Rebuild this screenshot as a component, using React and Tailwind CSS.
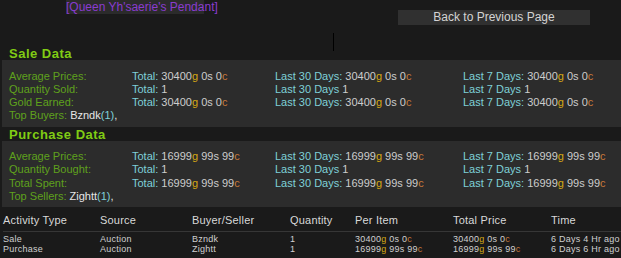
import React from "react";

const G = ({ children }) => <span className="text-[#d6a814]">{children}</span>;
const C = ({ children }) => <span className="text-[#c8783a]">{children}</span>;
const V = ({ children }) => <span className="text-[#cdcdcd]">{children}</span>;
const Cy = ({ children }) => <span className="text-[#7fd0d8]">{children}</span>;

function Money({ g, s, c }) {
  return (
    <>
      <V>{g}</V>
      <G>g</G>
      <V> {s}s {c}</V>
      <C>c</C>
    </>
  );
}

function Panel({ rows, topLabel, topName, topCount, cls }) {
  return (
    <div className={`ml-[2px] bg-[#2c2c2c] ${cls} pl-[7px] text-[11px] leading-[13.33px]`}>
      <div className="grid grid-cols-[123px_143px_188px_1fr] auto-rows-[13.33px]">
        {rows.map((r, i) => (
          <React.Fragment key={i}>
            <div className="text-[#5fa11c]">{r.label}</div>
            <div className="whitespace-nowrap">
              <Cy>Total: </Cy>
              {r.money ? <Money {...r.money} /> : <V>{r.plain}</V>}
            </div>
            <div className="whitespace-nowrap">
              <Cy>{r.money ? "Last 30 Days: " : "Last 30 Days "}</Cy>
              {r.money ? <Money {...r.money} /> : <V>{r.plain}</V>}
            </div>
            <div className="whitespace-nowrap">
              <Cy>{r.money ? "Last 7 Days: " : "Last 7 Days "}</Cy>
              {r.money ? <Money {...r.money} /> : <V>{r.plain}</V>}
            </div>
          </React.Fragment>
        ))}
      </div>
      <div className="h-[13.33px]">
        <span className="text-[#5fa11c]">{topLabel} </span>
        <span className="text-[#e6e6e6]">{topName}</span>
        <Cy>({topCount})</Cy>
        <span className="text-[#e6e6e6]">,</span>
      </div>
    </div>
  );
}

export default function App() {
  const sale = [
    { label: "Average Prices:", money: { g: "30400", s: "0", c: "0" } },
    { label: "Quantity Sold:", plain: "1" },
    { label: "Gold Earned:", money: { g: "30400", s: "0", c: "0" } },
  ];
  const purchase = [
    { label: "Average Prices:", money: { g: "16999", s: "99", c: "99" } },
    { label: "Quantity Bought:", plain: "1" },
    { label: "Total Spent:", money: { g: "16999", s: "99", c: "99" } },
  ];
  const cols = "grid grid-cols-[97px_92px_98px_65px_98px_98px_1fr]";
  return (
    <div
      className="relative w-[621px] h-[258px] overflow-hidden bg-[#1a1a1a]"
      style={{ fontFamily: '"Liberation Sans", Arial, sans-serif' }}
    >
      <div className="flex items-start h-[46px]">
        <div className="ml-[66px] h-[14px] w-[138px] bg-[#2b2b2b] text-[12px] leading-[14px] text-[#8a3ccf] text-center whitespace-nowrap">
          [Queen Yh'saerie's Pendant]
        </div>
        <div className="ml-auto mr-[31px] mt-[10px] h-[15px] w-[192px] bg-[#303030] text-[12px] leading-[15px] text-[#d4d4d4] text-center">
          Back to Previous Page
        </div>
      </div>
      <div className="absolute left-[333px] top-[33px] w-px h-[18px] bg-black" />

      <div className="h-[14px] pl-[9px] text-[13px] leading-[15px] font-bold tracking-[0.5px] text-[#80cc14]">
        Sale Data
      </div>
      <Panel rows={sale} topLabel="Top Buyers:" topName="Bzndk" topCount="1" cls="h-[67px] pt-[9.5px]" />

      <div className="h-[14px] pl-[9px] text-[13px] leading-[15px] font-bold tracking-[0.5px] text-[#80cc14]">
        Purchase Data
      </div>
      <Panel rows={purchase} topLabel="Top Sellers:" topName="Zightt" topCount="1" cls="h-[66px] pt-[9px]" />

      <div className="pl-[3px] pt-[7px]">
        <div className={`${cols} text-[11px] leading-[13px] text-[#d8d8d8] tracking-[0.2px]`}>
          <div>Activity Type</div>
          <div>Source</div>
          <div>Buyer/Seller</div>
          <div>Quantity</div>
          <div>Per Item</div>
          <div>Total Price</div>
          <div>Time</div>
        </div>
        <div className="mt-[4px] h-px bg-[#363636]" />
        <div className={`${cols} mt-[2px] text-[9px] leading-[10px] tracking-[0.25px] text-[#d0d0d0]`}>
          <div>Sale</div>
          <div>Auction</div>
          <div>Bzndk</div>
          <div>1</div>
          <div className="whitespace-nowrap">30400<G>g</G> 0s 0<C>c</C></div>
          <div className="whitespace-nowrap">30400<G>g</G> 0s 0<C>c</C></div>
          <div className="whitespace-nowrap">6 Days 4 Hr ago</div>
          <div>Purchase</div>
          <div>Auction</div>
          <div>Zightt</div>
          <div>1</div>
          <div className="whitespace-nowrap">16999<G>g</G> 99s 99<C>c</C></div>
          <div className="whitespace-nowrap">16999<G>g</G> 99s 99<C>c</C></div>
          <div className="whitespace-nowrap">6 Days 6 Hr ago</div>
        </div>
      </div>
    </div>
  );
}
